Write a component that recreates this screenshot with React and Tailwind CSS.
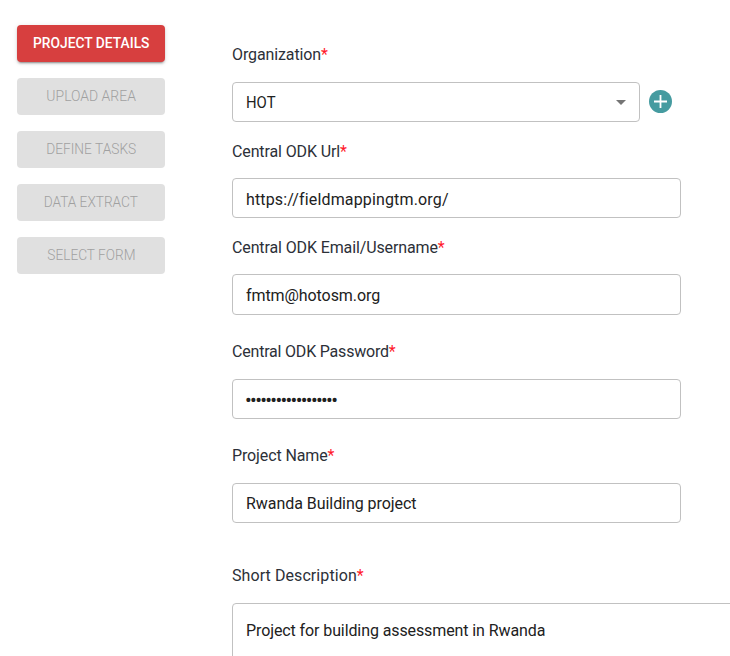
const steps = [
  { name: 'UPLOAD AREA', width: 'scale-x-[0.93]' },
  { name: 'DEFINE TASKS', width: 'scale-x-[0.915]' },
  { name: 'DATA EXTRACT', width: 'scale-x-[0.91]' },
  { name: 'SELECT FORM', width: 'scale-x-[0.91]' },
];

function Label({ children, className = '', tracking = 'tracking-[-0.12px]' }) {
  return (
    <label className={`flex h-6 shrink-0 items-center whitespace-nowrap pt-0.5 text-base text-[#2c3038] ${className}`}>
      <span className={tracking}>{children}</span>
      <span className="text-[#ff1a2b]">*</span>
    </label>
  );
}

function Field({ children, className = '', pad = 'pt-px' }) {
  return (
    <div className={`flex h-10 w-[449px] shrink-0 items-center whitespace-nowrap rounded border border-[#c1c1c1] px-[13px] text-base text-[#212121] ${pad} ${className}`}>
      {children}
    </div>
  );
}

export default function App() {
  return (
    <div className="flex h-[656px] w-[730px] overflow-hidden bg-white font-[Roboto,sans-serif]">
      <nav className="ml-[17px] mt-[25px] flex w-[148px] shrink-0 flex-col gap-4">
        <button className="h-[37px] rounded bg-[#d73f3f] text-[15px] font-medium text-white shadow-[0_3px_1px_-2px_rgba(0,0,0,0.2),0_2px_2px_rgba(0,0,0,0.14),0_1px_5px_rgba(0,0,0,0.12)]">
          <span className="inline-block scale-x-[0.92]">PROJECT DETAILS</span>
        </button>
        {steps.map((s) => (
          <button key={s.name} className="h-[37px] rounded bg-[#e0e0e0] text-[15px] font-light text-[#a0a0a0]">
            <span className={`inline-block ${s.width}`}>{s.name}</span>
          </button>
        ))}
      </nav>
      <main className="ml-[67px] flex w-[560px] shrink-0 flex-col pt-[42px]">
        <Label>Organization</Label>
        <div className="mt-4 flex shrink-0 items-center">
          <Field className="!w-[408px] justify-between">
            <span className="inline-block origin-left scale-x-[0.93]">HOT</span>
            <svg className="h-[5px] w-[10px]" viewBox="0 0 10 5">
              <path d="M0 0h10L5 5z" fill="#757575" />
            </svg>
          </Field>
          <svg className="mb-px ml-[9px] size-[23px]" viewBox="0 0 23 23">
            <circle cx="11.5" cy="11.5" r="11.5" fill="#459ba0" />
            <path d="M11.5 5v13M5 11.5h13" stroke="#fff" strokeWidth="1.8" />
          </svg>
        </div>
        <Label className="mt-[17px]">Central ODK Url</Label>
        <Field className="mt-[15px] tracking-[0.15px]" pad="pt-[3px]">https://fieldmappingtm.org/</Field>
        <Label className="mt-[17px]">Central ODK Email/Username</Label>
        <Field className="mt-[15px] !h-[41px] tracking-[-0.08px]" pad="pt-[3px]">fmtm@hotosm.org</Field>
        <Label className="mt-6" tracking="tracking-[-0.2px]">Central ODK Password</Label>
        <Field className="mt-4">
          <span className="-ml-px text-[20px] leading-6 tracking-[-1.68px]">••••••••••••••••••</span>
        </Field>
        <Label className="mt-6">Project Name</Label>
        <Field className="mt-4 tracking-[-0.05px]">Rwanda Building project</Field>
        <Label className="mt-10" tracking="tracking-[0.08px]">Short Description</Label>
        <Field className="mt-4 !h-24 !w-[560px] !items-start tracking-[-0.1px]" pad="pt-[15px]">Project for building assessment in Rwanda</Field>
      </main>
    </div>
  );
}
